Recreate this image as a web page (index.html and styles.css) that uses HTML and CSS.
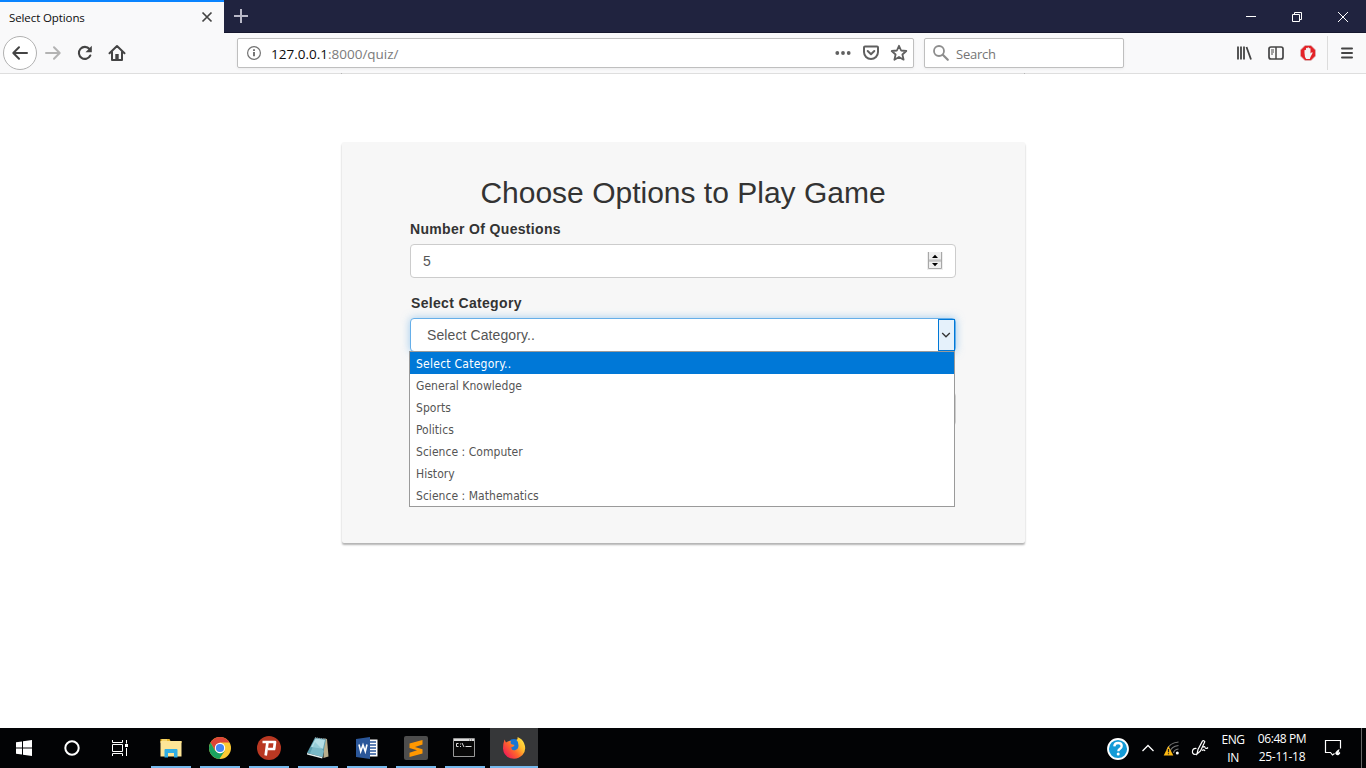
FILE: index.html
```html
<!DOCTYPE html>
<html lang="en">
<head>
<meta charset="utf-8">
<title>Select Options</title>
<link rel="stylesheet" href="styles.css">
</head>
<body>
<header class="titlebar">
  <div class="tab"><span class="tab-title">Select Options</span>
    <svg class="tab-close" width="12" height="12" viewBox="0 0 12 12"><path d="M1.500 1.500l9 9M10.500 1.500l-9 9" stroke="#444" stroke-width="1.700"/></svg>
  </div>
  <svg class="new-tab" width="16" height="16" viewBox="0 0 16 16"><path d="M8 1v14M1 8h14" stroke="#b9b9c8" stroke-width="2"/></svg>
  <div class="window-controls">
    <svg width="46" height="33"><path d="M18 16.500h10" stroke="#fff"/></svg>
    <svg width="46" height="33"><path d="M18.500 14.500h7v7h-7zM20.500 14v-1.500h7v7H26" fill="none" stroke="#fff"/></svg>
    <svg width="46" height="33"><path d="M18 12l10 10M28 12L18 22" stroke="#fff"/></svg>
  </div>
</header>
<nav class="toolbar">
  <div class="back"><svg width="18" height="18" viewBox="0 0 18 18"><path d="M16 9H2.500M8 3.300L2.300 9 8 14.700" fill="none" stroke="#444" stroke-width="2" stroke-linecap="round" stroke-linejoin="round"/></svg></div>
  <div class="tool"><svg width="18" height="18" viewBox="0 0 18 18"><path d="M2 9h13.500M10 3.300L15.700 9 10 14.700" fill="none" stroke="#b3b3b3" stroke-width="2" stroke-linecap="round" stroke-linejoin="round"/></svg></div>
  <div class="tool"><svg width="18" height="18" viewBox="0 0 18 18"><path d="M14.300 11.500A6 6 0 1 1 13.500 5" fill="none" stroke="#444" stroke-width="2.100" stroke-linecap="round"/><path d="M15.800 1.800v6.400H9.500z" fill="#444"/></svg></div>
  <div class="tool"><svg width="18" height="18" viewBox="0 0 18 18"><path d="M1.500 9.300L9 2l7.500 7.300M4 8v8h10V8" fill="none" stroke="#444" stroke-width="2" stroke-linecap="round" stroke-linejoin="round"/><path d="M7.300 15v-5h3.400v5z" fill="#444"/></svg></div>
  <div class="urlbar">
    <svg width="16" height="16" viewBox="0 0 16 16"><circle cx="8" cy="8" r="6.400" fill="none" stroke="#737373" stroke-width="1.200"/><path d="M8 7v4.300M8 4.200v1.700" stroke="#666" stroke-width="1.800"/></svg>
    <span class="url"><b>127.0.0.1</b>:8000/quiz/</span>
    <span class="url-actions">
      <svg width="18" height="18" viewBox="0 0 18 18" fill="#606060"><circle cx="3.300" cy="9" r="1.900"/><circle cx="9" cy="9" r="1.900"/><circle cx="14.700" cy="9" r="1.900"/></svg>
      <svg width="18" height="18" viewBox="0 0 18 18" fill="none" stroke="#606060" stroke-width="2" stroke-linecap="round" stroke-linejoin="round"><path d="M3 2.500h12q1 0 1 1V8a7 7 0 0 1-14 0V3.500q0-1 1-1zM5.700 7L9 10.200 12.300 7"/></svg>
      <svg width="18" height="18" viewBox="0 0 18 18" fill="none" stroke="#606060" stroke-width="1.800" stroke-linejoin="round"><path d="M9 1.800l2.100 4.700 5.200.500-3.900 3.500 1.200 5.200L9 13l-4.600 2.700 1.200-5.200L1.700 7l5.200-.500z"/></svg>
    </span>
  </div>
  <div class="searchbar">
    <svg width="18" height="18" viewBox="0 0 18 18" fill="none" stroke="#8d8d8d"><circle cx="7" cy="7" r="5" stroke-width="1.800"/><path d="M10.800 10.800l5 5" stroke-width="2.200" stroke-linecap="round"/></svg>
    <span>Search</span>
  </div>
  <div class="toolbar-end">
    <div class="tool"><svg width="16" height="16" viewBox="0 0 16 16"><path d="M2 1.500v13M5 1.500v13M8 1.500v13M10.500 2l4.500 12.500" stroke="#444" stroke-width="1.800"/></svg></div>
    <div class="tool"><svg width="16" height="16" viewBox="0 0 16 16" fill="none" stroke="#444"><rect x="1" y="2" width="14" height="12" rx="2" stroke-width="1.700"/><path d="M8 2v12" stroke-width="1.500"/><path d="M3 5h3M3 7h3M3 9h2" stroke-width="1"/></svg></div>
    <div class="tool"><svg width="16" height="16" viewBox="0 0 16 16"><path d="M5 .500h6L15.500 5v6L11 15.500H5L.500 11V5z" fill="#e32227" stroke="#d9b6b6" stroke-width=".7"/><path d="M4.500 8V5.300q.8-1 1.500 0V3.200q.8-1 1.500 0v-.500q.8-1 1.500 0v.700q.8-1 1.500 0v5l1-1q1-.400 1.200.400L10.500 12 9.800 14H6.200L5 12z" fill="#f3f3f3"/></svg></div>
    <div class="menu"><svg width="14" height="14" viewBox="0 0 14 14"><path d="M2 2.500h10M2 7h10M2 11.500h10" stroke="#444" stroke-width="2" stroke-linecap="round"/></svg></div>
  </div>
</nav>
<main class="page">
  <div class="page-top"></div>
  <form class="card">
    <h1>Choose Options to Play Game</h1>
    <label>Number Of Questions</label>
    <div class="field"><span>5</span>
      <svg width="16" height="18" viewBox="0 0 16 18"><path d="M0 0h16v18H0z" fill="#eee"/><path d="M1.500 0v16.500h13V0M1.500 9h13" fill="none" stroke="#a8a8a8"/><path d="M2 8h12" stroke="#b7b7b7"/><path d="M5 6h6L8 2.800zM5 11h6l-3 3.200z" fill="#000"/></svg>
    </div>
    <label class="category-label">Select Category</label>
    <div class="select-wrap">
      <div class="field select"><span>Select Category..</span>
        <div class="select-button"><svg width="10" height="8" viewBox="0 0 10 8"><path d="M1.200 2L5 5.800 8.800 2" fill="none" stroke="#333" stroke-width="1.300"/></svg></div>
      </div>
      <ul class="options">
        <li class="selected">Select Category..</li><li>General Knowledge</li><li>Sports</li><li>Politics</li><li>Science : Computer</li><li>History</li><li>Science : Mathematics</li>
      </ul>
    </div>
    <div class="field next-field"></div>
  </form>
</main>
<footer class="taskbar">
  <div class="launch"><svg width="16" height="16" viewBox="0 0 16 16" fill="#fff"><path d="M0 2.300l6-.900v6.100H0zM7 1.200L16 0v7.500H7zM0 8.500h6v6.100l-6-.900zM7 8.500h9V16l-9-1.200z"/></svg></div>
  <div class="launch"><svg width="18" height="18" viewBox="0 0 18 18"><circle cx="9" cy="9" r="6.700" fill="none" stroke="#fff" stroke-width="2"/></svg></div>
  <div class="launch"><svg width="18" height="18" viewBox="0 0 18 18" fill="none" stroke="#fff"><path d="M1.500 5.500h10v7h-10zM1.500 1v2.500h10V1M1.500 17v-2.500h10V17M15.500 1v3.500M15.500 9v8"/><path d="M14 5h3v3h-3z" fill="#fff" stroke="none"/></svg></div>
  <div class="apps">
    <div class="app"><svg width="24" height="24" viewBox="0 0 24 24"><path d="M1.500 3h9l1 2h11v2h-21z" fill="#e8b72d"/><path d="M1.500 5h21v15.500h-21z" fill="#fde596"/><path d="M3 3.500h5v1H3z" fill="#fff0b0"/><path d="M5.500 14q0-1 1-1h11q1 0 1 1v7.500h-3.500V17H9v4.500H5.500z" fill="#30aee4"/></svg></div>
    <div class="app"><svg width="24" height="24" viewBox="0 0 24 24"><circle cx="12" cy="12" r="11" fill="#fbc934"/><path d="M2.500 6.500A11 11 0 0 1 21.500 6.500H12L7.200 14.700z" fill="#dc4538"/><path d="M2.500 6.500L7.200 14.700 12 17.500 16.800 14.700 11.400 23A11 11 0 0 1 2.500 6.500z" fill="#1aa260"/><circle cx="12" cy="12" r="5.200" fill="#fff"/><circle cx="12" cy="12" r="4.100" fill="#4385f5"/></svg></div>
    <div class="app"><svg width="24" height="24" viewBox="0 0 24 24"><circle cx="12" cy="12" r="12" fill="#b93822"/><path d="M5.500 6H18l-.900 7H11M10.500 6L8.700 19.500" fill="none" stroke="#fff" stroke-width="2.700" stroke-linejoin="round"/></svg></div>
    <div class="app"><svg width="24" height="24" viewBox="0 0 24 24"><path d="M18 2.500l3 .5 1.500 17.500-5 1.500z" fill="#b9ae8c"/><path d="M9 1.500L20 3l-3.500 18L1 17z" fill="#5b9fb0"/><path d="M9.500 2.500l9.500 1.300-2 9L5 11z" fill="#b5dfe6"/><path d="M9 6l9 9-1 6-13-3.500z" fill="#87c4d1" opacity=".7"/><path d="M1 17l15.500 4-.3 1.500L1 18.500z" fill="#e6f2f2"/><path d="M9 1.800l11.500 1.500" stroke="#999" stroke-dasharray="1 1"/></svg></div>
    <div class="app"><svg width="24" height="24" viewBox="0 0 24 24"><path d="M12 3.500h10.500v17H12z" fill="#fff"/><path d="M14 6h7M14 9h7M14 12h7M14 15h7M14 18h7" stroke="#2b579a" stroke-width="1.300"/><path d="M1 3l14-2v22L1 21z" fill="#2b579a"/><path d="M4 8.500l1.700 7L8 9l2.300 6.500 1.700-7" fill="none" stroke="#fff" stroke-width="1.600"/></svg></div>
    <div class="app"><svg width="24" height="24" viewBox="0 0 24 24"><rect width="24" height="24" rx="2" fill="#4d4d4d"/><path d="M5.500 7.500L18.500 4v4.500L11 11l7.500 2.200v4.300L5.500 21v-4.300L13 14.200 5.500 12z" fill="#ff9800"/></svg></div>
    <div class="app console"><svg width="24" height="24" viewBox="0 0 24 24"><path d="M1.500 2.500h21v18h-21z" fill="#080808" stroke="#999"/><path d="M2 3h20v2H2z" fill="#ddd"/><path d="M17 4h1M19 4h1" stroke="#666"/><path d="M6.500 7.500h-2v3h2M8.500 7.500v1M8.500 10v1M10 7l2 4M13.500 10.500h6" fill="none" stroke="#ddd"/></svg></div>
    <div class="app active"><svg width="24" height="24" viewBox="0 0 24 24"><defs><linearGradient id="fox" x1="1" y1="0" x2="0" y2=".8"><stop offset="0" stop-color="#fff44f"/><stop offset=".35" stop-color="#ffbd2e"/><stop offset=".6" stop-color="#ff6a2a"/><stop offset="1" stop-color="#ef1459"/></linearGradient></defs><circle cx="12" cy="10.500" r="7.500" fill="#1a75d2"/><path d="M2.500 3.500l1.500 3Q6 4.500 9 5q-1 2 .5 3.300l3 .7q-.3 1.700-3.500 2.500 1 3.500 4.500 2.500 3-1 3-4.500 0-4-2-5.500Q16 3 15.500 1q5 2 6.500 6 3 7-1.500 12-5 5-12 3.200Q1.500 20 1 12.500q0-5 1.500-9z" fill="url(#fox)"/></svg></div>
  </div>
  <div class="tray">
    <svg class="help" width="24" height="24" viewBox="0 0 24 24"><circle cx="12" cy="13" r="10" fill="#149bd7" stroke="#fff" stroke-width="1.800"/><path d="M8.300 10.300q.3-3.300 3.800-3.300 3.600 0 3.600 3 0 1.700-1.700 2.700-1.700 1-1.700 2.500" fill="none" stroke="#fff" stroke-width="2.300"/><circle cx="12.200" cy="18" r="1.500" fill="#fff"/></svg>
    <svg class="chevron" width="14" height="10" viewBox="0 0 14 10"><path d="M1.500 8L7 2.500 12.500 8" fill="none" stroke="#fff" stroke-width="1.300"/></svg>
    <svg class="wifi" width="18" height="16" viewBox="0 0 18 16"><g fill="none" stroke="#777" stroke-width="1.200"><path d="M4 10Q6 3 15.500 2"/><path d="M7 12Q8 6.500 15.500 5.500"/><path d="M10.500 13Q11 9.500 15.500 9"/></g><circle cx="14.300" cy="13" r="1.500" fill="#fff"/><path d="M5.500 6L10.300 15.500H.700z" fill="#fdb913"/><path d="M5.500 9v3.300M5.500 13.300v1" stroke="#222" stroke-width="1.200"/></svg>
    <svg class="pen" width="18" height="18" viewBox="0 0 18 18" fill="none" stroke="#fff" stroke-width="1.200"><path d="M5.500 9.500Q2 9 1.500 12t2.500 3.500q2-.2 3-1.500M6 15l1-4.500 4.500-8.500q1.500-1 2.300.8L9.500 12zM12 8.500q1.500-2 2 0 1 2 3 0M11 11.500q2-1.500 3 .5"/></svg>
    <div class="lang"><span>ENG</span><span>IN</span></div>
    <div class="clock"><span>06:48 PM</span><span class="date">25-11-18</span></div>
    <svg class="notice" width="18" height="18" viewBox="0 0 18 18"><path d="M10.500 14.500L8.500 16 6.500 13.500h-5v-12h15v8" fill="none" stroke="#fff" stroke-width="1.200"/><path d="M15.500 10Q11.500 12 11.200 14.500q1 2.200 3.500 1.500 2.300-1.500 1.300-3.500l-1.500 1.800z" fill="#fff"/></svg>
    <i class="show-desktop"></i>
  </div>
</footer>
</body>
</html>
```
FILE: styles.css
```css
* { box-sizing: border-box; }
body { margin: 0; width: 1366px; height: 768px; overflow: hidden; display: flex; flex-direction: column; background: #fff; font-family: "Open Sans", sans-serif; font-size: 12px; }
svg { display: block; flex: none; }
.titlebar { height: 33px; flex: none; display: flex; background: #20233f; border-bottom: 1px solid #15172e; }
.tab { width: 224px; height: 33px; flex: none; display: flex; align-items: center; justify-content: space-between; padding: 0 11px 2px 9px; background: #f9f9fa; border-top: 2px solid #0a84ff; color: #0c0c0d; }
.tab-title { padding-top: 2px; font-size: 11.5px; letter-spacing: -.1px; white-space: nowrap; }
.new-tab { margin: 8px 0 0 9px; }
.window-controls { display: flex; margin-left: auto; }
.toolbar { height: 41px; flex: none; display: flex; align-items: center; background: #f9f9fa; border-bottom: 1px solid #dedede; }
.back { width: 34px; height: 34px; margin-left: 3px; border: 1px solid #b1b1b1; border-radius: 50%; background: #fff; display: grid; place-items: center; }
.tool { width: 32px; display: grid; place-items: center; }
.urlbar, .searchbar { height: 30px; display: flex; align-items: center; background: #fff; border: 1px solid #bfbfbf; border-radius: 2px; box-shadow: 0 1px 3px rgba(0, 0, 0, .06); }
.urlbar { width: 677px; margin-left: 104px; padding: 0 5px 0 8px; }
.url { margin-left: 9px; padding-top: 1px; font-size: 13.5px; letter-spacing: 0; color: #7b7b7b; white-space: nowrap; }
.url b { font-weight: 400; color: #0c0c0d; }
.url-actions { display: flex; gap: 10px; margin-left: auto; }
.searchbar { width: 200px; margin-left: 10px; padding-left: 7px; gap: 6px; color: #757575; font-size: 13px; letter-spacing: -.25px; }
.searchbar span { padding-top: 1px; }
.toolbar-end { display: flex; align-items: center; margin-left: auto; }
.menu { width: 39px; height: 34px; margin-left: 3px; border-left: 1px solid #dcdcdc; display: grid; place-items: center; }
.page { flex: 1; min-height: 0; display: flex; flex-direction: column; align-items: center; font-family: "Liberation Sans", Arial, sans-serif; }
.page-top { width: 684px; height: 1px; margin-top: -1px; border: solid #b5b5b5; border-width: 0 1px; z-index: 1; }
.card { width: 683px; height: 401px; margin: 68px 0 0 1px; padding: 34px 69px 0 68px; background: #f7f7f7; border-radius: 2px; box-shadow: 0 2px 2px rgba(0, 0, 0, .3); }
.card h1 { height: 33px; margin: 0 0 10px; font-size: 30px; line-height: 33px; font-weight: 400; text-align: center; color: #333; white-space: nowrap; }
.card label { display: block; height: 20px; margin-bottom: 5px; line-height: 20px; font-size: 14px; font-weight: 700; color: #333; letter-spacing: .33px; }
.card .category-label { padding-left: 1px; }
.field { width: 546px; height: 34px; display: flex; align-items: center; justify-content: space-between; margin-bottom: 15px; padding: 0 12px 0 12px; background: #fff; border: 1px solid #ccc; border-radius: 4px; color: #555; font-size: 14px; }
.select-wrap { position: relative; }
.select { padding: 0 0 0 16px; border-color: #66afe9; box-shadow: 0 0 8px rgba(102, 175, 233, .6); letter-spacing: .1px; }
.select-button { width: 17px; height: 32px; display: grid; place-items: center; padding-right: 1px; background: #e5f1fb; border: 1px solid #0078d7; }
.select-button svg { margin-left: -1px; }
.options { position: absolute; left: -1px; top: 33px; width: 546px; height: 156px; margin: 0; padding: 0; list-style: none; background: #fff; border: 1px solid #9a9a9a; font-family: "DejaVu Sans Condensed", "Noto Sans", sans-serif; font-size: 12px; line-height: 22px; color: #555; letter-spacing: .04px; }
.options li { height: 22px; padding: 1px 0 0 6px; }
.options .selected { background: #0078d7; color: #fff; letter-spacing: .25px; }
.next-field { margin-top: 40px; }
.taskbar { height: 40px; flex: none; display: flex; background: #020305; color: #fff; }
.launch { width: 48px; display: grid; place-items: center; }
.apps { display: flex; gap: 1px; margin-left: 3px; }
.app { width: 48px; height: 40px; display: grid; place-items: center; background: linear-gradient(#76b9ed, #76b9ed) center bottom / 40px 2px no-repeat; }
.console svg { margin-right: 2px; }
.app.active { background-color: #363739; background-size: 48px 2px; }
.tray { display: flex; align-items: center; margin-left: auto; font-size: 12px; letter-spacing: -.4px; }
.chevron { margin-left: 11px; }
.wifi { margin-left: 8px; }
.pen { margin-left: 10px; }
.lang, .clock { display: flex; flex-direction: column; align-items: center; line-height: 18px; white-space: nowrap; }
.lang { width: 30px; margin-left: 9px; padding-top: 1px; }
.clock { width: 54px; margin-left: 7px; }
.date { letter-spacing: -.3px; }
.notice { margin-left: 15px; }
.show-desktop { width: 5px; height: 40px; margin-left: 19px; border-left: 1px solid #666; }
```
